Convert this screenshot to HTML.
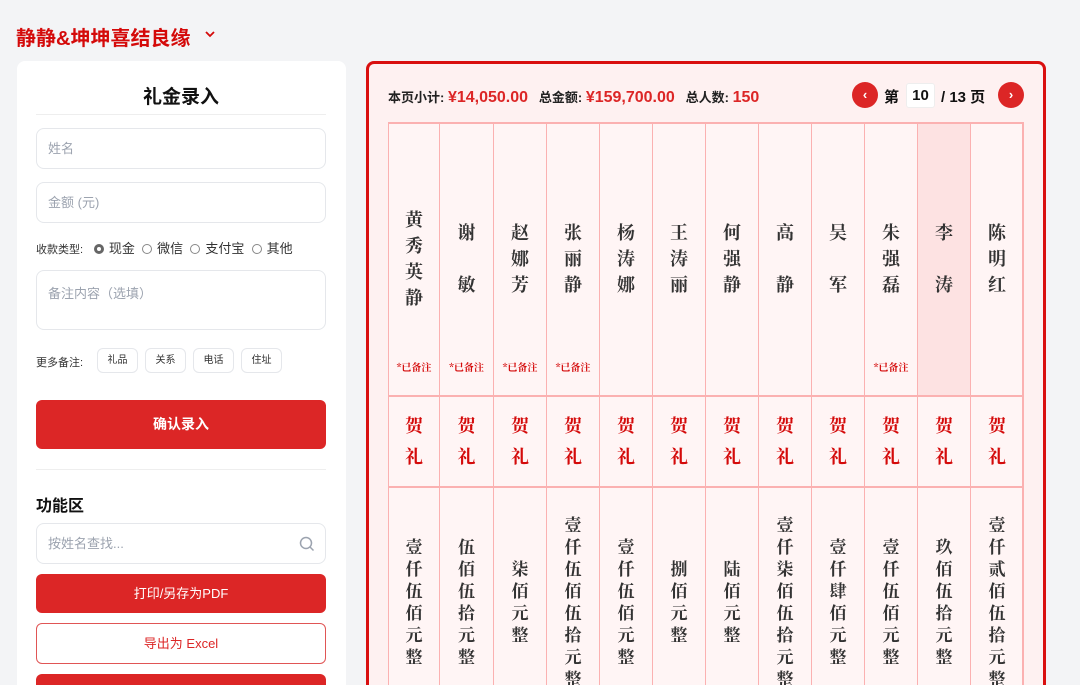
<!DOCTYPE html>
<html><head><meta charset="utf-8"><style>
*{box-sizing:border-box;margin:0;padding:0}
html,body{width:1080px;height:685px;overflow:hidden}
body{background:#f3f4f6;font-family:"Liberation Sans","Noto Sans CJK SC",sans-serif;position:relative;color:#111}
.abs{position:absolute}
.title{left:16px;top:22px;font-size:20px;font-weight:bold;color:#d40a0a}
.card{left:17px;top:61px;width:329px;height:624px;background:#fff;border-radius:8px 8px 0 0}
.inp{position:absolute;left:36px;width:290px;border:1px solid #e5e7eb;border-radius:8px;color:#9ca3af;font-size:13px;padding-left:11px}
.btn{position:absolute;left:36px;width:290px;border-radius:6px;background:#dc2626;color:#fff;font-size:13px;text-align:center}
.chip{position:absolute;top:348px;height:25px;border:1px solid #e5e7eb;border-radius:6px;font-size:10px;line-height:23px;text-align:center;color:#333}
.radio{display:inline-block;width:10px;height:10px;border:1px solid #888;border-radius:50%;vertical-align:-1px;margin-right:5px}
.panel{left:366px;top:61px;width:680px;height:624px;border:3px solid #d90f0f;border-bottom:none;border-radius:8px 8px 0 0;background:#fef1f1}
.col{position:absolute;top:122px;height:563px;border:1px solid #fbb1b1;border-right:none;border-bottom:none;background:#fff5f5}
.vt{position:absolute;left:0;right:0;text-align:center;font-family:"Noto Serif CJK SC",serif;font-weight:bold;color:#333}
.hline{position:absolute;left:388px;width:636px;height:2px;background:#fbb1b1}
.note{position:absolute;top:236px;left:0;right:0;text-align:center;color:#d40a0a;font-size:10px;font-family:"Noto Serif CJK SC",serif;font-weight:bold}
</style></head><body>
<div class="abs title">静静&amp;坤坤喜结良缘</div>
<svg class="abs" style="left:204px;top:29px" width="12" height="10" viewBox="0 0 12 10"><path d="M2 3l4 4 4-4" fill="none" stroke="#d40a0a" stroke-width="1.8"/></svg>
<div class="abs card"></div>
<div class="abs" style="left:36px;top:82px;width:290px;text-align:center;font-size:19px;font-weight:bold">礼金录入</div>
<div class="abs" style="left:36px;top:114px;width:290px;height:1px;background:#eee"></div>
<div class="inp" style="top:128px;height:41px;line-height:39px">姓名</div>
<div class="inp" style="top:182px;height:41px;line-height:39px">金额 (元)</div>
<div class="abs" style="left:36px;top:238px;font-size:13px;color:#333"><span style="font-size:11px">收款类型:</span>&nbsp;&nbsp;&nbsp;<span class="radio" style="border:3px solid #666;background:#fff"></span>现金&nbsp;&nbsp;<span class="radio"></span>微信&nbsp;&nbsp;<span class="radio"></span>支付宝&nbsp;&nbsp;<span class="radio"></span>其他</div>
<div class="inp" style="top:270px;height:60px;padding-top:12px">备注内容（选填）</div>
<div class="abs" style="left:36px;top:354px;font-size:11px;color:#333">更多备注:</div>
<div class="chip" style="left:97px;width:41px">礼品</div>
<div class="chip" style="left:145px;width:41px">关系</div>
<div class="chip" style="left:193px;width:41px">电话</div>
<div class="chip" style="left:241px;width:41px">住址</div>
<div class="btn" style="top:400px;height:49px;line-height:49px;font-weight:bold;font-size:14px">确认录入</div>
<div class="abs" style="left:36px;top:469px;width:290px;height:1px;background:#eee"></div>
<div class="abs" style="left:36px;top:492px;font-size:16px;font-weight:bold">功能区</div>
<div class="inp" style="top:523px;height:41px;line-height:39px">按姓名查找...<svg style="position:absolute;right:10px;top:12px" width="16" height="16" viewBox="0 0 16 16"><circle cx="7" cy="7" r="5.5" fill="none" stroke="#9ca3af" stroke-width="1.5"/><path d="M11 11l3.5 3.5" stroke="#9ca3af" stroke-width="1.5"/></svg></div>
<div class="btn" style="top:574px;height:39px;line-height:39px">打印/另存为PDF</div>
<div class="btn" style="top:623px;height:41px;line-height:39px;background:#fff;border:1px solid #e05555;color:#dc2626">导出为 Excel</div>
<div class="btn" style="top:674px;height:11px;border-radius:6px 6px 0 0"></div>

<div class="abs panel"></div>
<div class="abs" style="left:388px;top:87px;font-size:13px;font-weight:bold;color:#222">本页小计: <span style="color:#dc2626;font-size:16px">¥14,050.00</span>&nbsp;&nbsp;&nbsp;总金额: <span style="color:#dc2626;font-size:16px">¥159,700.00</span>&nbsp;&nbsp;&nbsp;总人数: <span style="color:#dc2626;font-size:16px">150</span></div>
<div class="abs" style="left:852px;top:82px;width:26px;height:26px;border-radius:50%;background:#dc2626;color:#fff;text-align:center;line-height:25px;font-size:13px;font-weight:bold">‹</div>
<div class="abs" style="left:884px;top:86px;font-size:15px;font-weight:bold">第</div>
<div class="abs" style="left:906px;top:83px;width:29px;height:25px;background:#fff;border:1px solid #eee;border-radius:3px;text-align:center;line-height:23px;font-size:15px;font-weight:bold">10</div>
<div class="abs" style="left:941px;top:86px;font-size:15px;font-weight:bold">/ 13 页</div>
<div class="abs" style="left:998px;top:82px;width:26px;height:26px;border-radius:50%;background:#dc2626;color:#fff;text-align:center;line-height:25px;font-size:13px;font-weight:bold">›</div>

<div id="tbl"></div>
<div class="abs" style="left:1022px;top:122px;width:2px;height:563px;background:#fbb1b1"></div>
<div class="hline" style="top:122px"></div>
<div class="hline" style="top:395px"></div>
<div class="hline" style="top:486px"></div>
<script>
(function(){
var L=[388,439,493,546,599,652,705,758,811,864,917,970,1023];
var names=["黄秀英静","谢 敏","赵娜芳","张丽静","杨涛娜","王涛丽","何强静","高 静","吴 军","朱强磊","李 涛","陈明红"];
var notes=[1,1,1,1,0,0,0,0,0,1,0,0];
var amt=["壹仟伍佰元整","伍佰伍拾元整","柒佰元整","壹仟伍佰伍拾元整","壹仟伍佰元整","捌佰元整","陆佰元整","壹仟柒佰伍拾元整","壹仟肆佰元整","壹仟伍佰元整","玖佰伍拾元整","壹仟贰佰伍拾元整"];
var h="";
for(var i=0;i<12;i++){
 var w=L[i+1]-L[i];
 h+='<div class="col" style="left:'+L[i]+'px;width:'+w+'px">';
 if(i==10)h+='<div style="position:absolute;left:0;right:0;top:0;height:273px;background:#fde2e2"></div>';
 var n=names[i].split("");
 var nt=135-n.length*13;
 h+='<div class="vt" style="top:'+nt+'px;font-size:18px;line-height:26px">'+n.map(function(c){return c==" "?"&nbsp;":c}).join("<br>")+'</div>';
 if(notes[i])h+='<div class="note">*已备注</div>';
 h+='<div class="vt" style="top:287px;font-size:18px;line-height:31px;color:#d40a0a">贺<br>礼</div>';
 var a=amt[i].split("");
 h+='<div class="vt" style="top:'+(478-a.length*11)+'px;font-size:17px;line-height:22px">'+a.join("<br>")+'</div>';
 h+='</div>';
}
document.getElementById("tbl").innerHTML=h;
})();
</script>
</body></html>
